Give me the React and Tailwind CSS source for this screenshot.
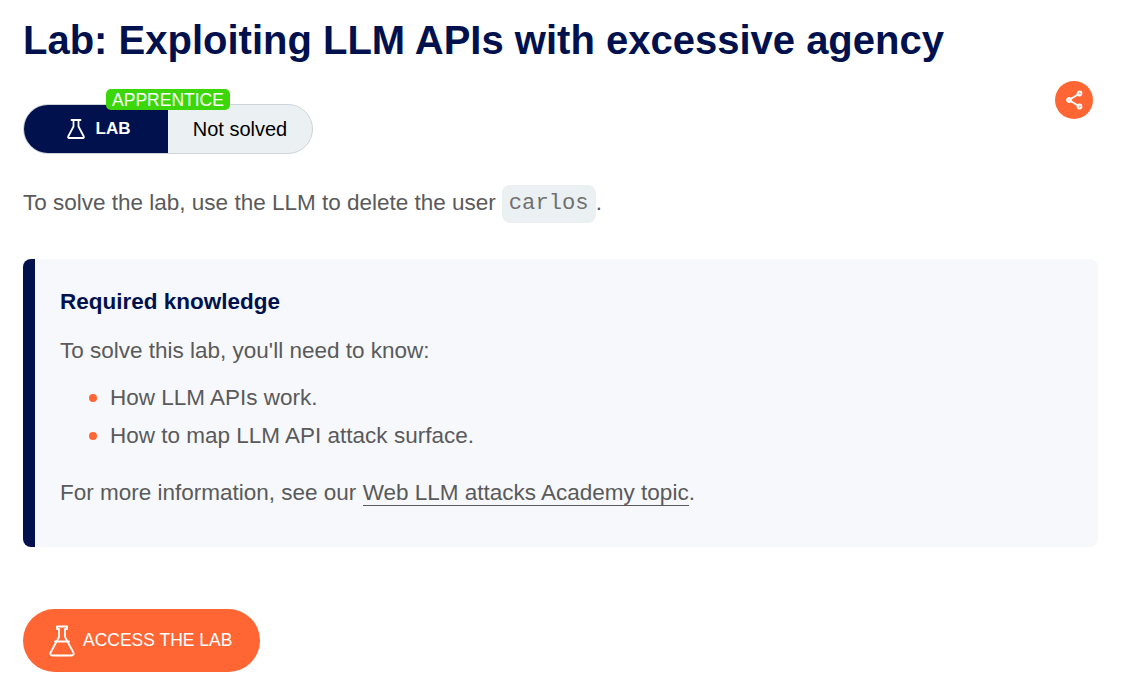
const FONT = "font-['Liberation_Sans',Arial,sans-serif]";

const FlaskSmall = () => (
  <svg width="20" height="22" viewBox="0 0 20 22" fill="none" stroke="white" strokeWidth="1.8" strokeLinejoin="round" strokeLinecap="round">
    <path d="M5.5 2h9M7.5 2v6.5L2.2 18.5a1 1 0 0 0 .9 1.5h13.8a1 1 0 0 0 .9-1.5L12.5 8.5V2" />
  </svg>
);

const FlaskLarge = () => (
  <svg width="26" height="32" viewBox="0 0 26 32" fill="none" stroke="white" strokeWidth="1.8" strokeLinejoin="round" strokeLinecap="round">
    <path d="M8 1.5h10v2.5h-2v8l8.4 15.5a2 2 0 0 1-1.8 3H3.4a2 2 0 0 1-1.8-3L10 12V4H8z" />
    <path d="M6 16.5h14" />
  </svg>
);

const ShareIcon = () => (
  <svg width="20" height="20" viewBox="0 0 20 20" fill="none" stroke="white" strokeWidth="1.8">
    <path d="M15.5 3.5 5 10l10.5 6.5" />
    <circle cx="15.5" cy="3.5" r="2" />
    <circle cx="5" cy="10" r="2" />
    <circle cx="15.5" cy="16.5" r="2" />
  </svg>
);

const Bullet = ({ children }) => (
  <li className="flex h-[34px] items-center gap-[13px]">
    <span className="h-[8px] w-[8px] rounded-full bg-[#ff6633]" />
    {children}
  </li>
);

export default function App() {
  return (
    <div className={`${FONT} h-[680px] w-[1143px] overflow-hidden bg-white pl-[23px] pr-[45px] text-[22.5px] text-[#5a5a5a]`}>
      <h1 className="pt-[16px] text-[40px] font-bold leading-[48px] text-[#01114e]">
        Lab: Exploiting LLM APIs with excessive agency
      </h1>

      <div className="mt-[16px] flex items-start justify-between">
        <div className="relative mt-[24px]">
          <div className="flex h-[50px] w-[290px] overflow-hidden rounded-[25px] border border-[#ced4da] bg-[#ebf0f2]">
            <div className="flex w-[144px] items-center justify-center gap-[10px] bg-[#01114e] pl-[4px] text-[17px] font-bold text-white">
              <FlaskSmall />
              <span>LAB</span>
            </div>
            <div className="flex flex-1 items-center justify-center text-[20px] text-black">Not solved</div>
          </div>
          <span className="absolute left-[83px] top-[-15px] flex h-[21px] w-[124px] items-center justify-center rounded-[5px] bg-[#3cd70a] pt-[1px] text-[17.5px] text-white">
            APPRENTICE
          </span>
        </div>
        <button className="mr-[5px] mt-[1px] flex h-[38px] w-[38px] items-center justify-center rounded-full bg-[#ff6633]">
          <ShareIcon />
        </button>
      </div>

      <p className="mt-[31px] flex h-[38px] items-center">
        <span className="pb-[2px]">To solve the lab, use the LLM to delete the user</span>
        <code className="ml-[6px] flex h-[38px] items-center rounded-[8px] bg-[#ebf0f2] px-[7px] font-['Liberation_Mono',monospace] text-[22.2px] text-[#707070]">
          carlos
        </code>
        <span className="pb-[2px]">.</span>
      </p>

      <section className="mt-[36px] h-[288px] rounded-[8px] border-l-[12px] border-[#01114e] bg-[#f6f8fc] pl-[25px] pr-[24px] pt-[29px]">
        <h4 className="text-[22.5px] font-bold leading-[28px] text-[#01114e]">Required knowledge</h4>
        <p className="mt-[18px] leading-[34px]">To solve this lab, you'll need to know:</p>
        <ul className="mt-[13px] flex flex-col gap-[4px] pl-[29px]">
          <Bullet>How LLM APIs work.</Bullet>
          <Bullet>How to map LLM API attack surface.</Bullet>
        </ul>
        <p className="mt-[23px] leading-[34px]">
          For more information, see our{" "}
          <a href="#" className="border-b border-[#5a5a5a]">Web LLM attacks Academy topic</a>.
        </p>
      </section>

      <button className="mt-[62px] flex h-[63px] w-[237px] items-center gap-[8px] rounded-[32px] bg-[#ff6633] pl-[26px] text-[17.5px] text-white">
        <FlaskLarge />
        ACCESS THE LAB
      </button>
    </div>
  );
}
